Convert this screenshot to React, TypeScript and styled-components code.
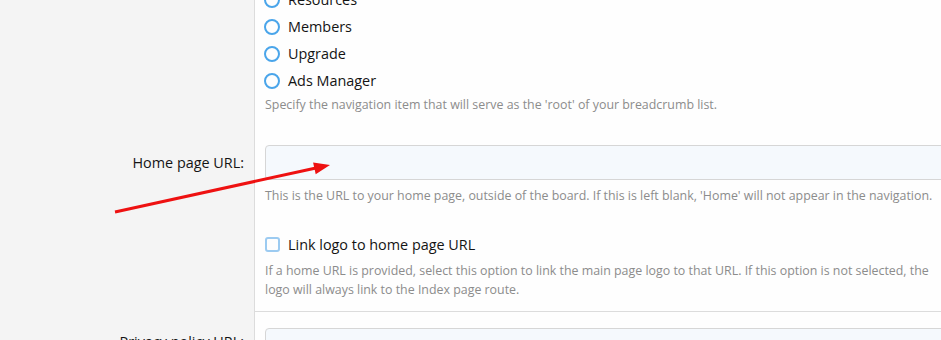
import styled, { createGlobalStyle } from "styled-components";

const GlobalStyle = createGlobalStyle`
  body {
    margin: 0;
    background: #fefefe;
    overflow: hidden;
    font-family: "Open Sans", "Noto Sans", sans-serif;
    color: #141414;
  }
`;

const Page = styled.div`
  position: relative;
  width: 960px;
  margin-top: -14px;
`;

const FormRow = styled.div`
  display: grid;
  grid-template-columns: 255px 1fr;
`;

const Term = styled.div<{ $pt?: number; $pb?: number }>`
  background: #f4f4f4;
  border-right: 1px solid #dcdcdc;
  text-align: right;
  padding: ${(p) => p.$pt ?? 0}px 10px ${(p) => p.$pb ?? 0}px 10px;
`;

const Desc = styled.div<{ $pt?: number; $pb?: number; $separated?: boolean }>`
  padding: ${(p) => p.$pt ?? 0}px 10px ${(p) => p.$pb ?? 0}px 10px;
  border-top: ${(p) => (p.$separated ? "1px solid #dcdcdc" : "none")};
`;

const Label = styled.div`
  font-size: 14.4px;
  line-height: 35px;
  color: #141414;
`;

const ChoiceList = styled.div`
  display: flex;
  flex-direction: column;
`;

const Choice = styled.label`
  display: flex;
  align-items: center;
  gap: 8px;
  height: 27px;
  font-size: 14.4px;
  color: #141414;
`;

const RadioMark = styled.span`
  box-sizing: border-box;
  width: 16px;
  height: 16px;
  margin-left: -1px;
  border: 2.5px solid #4aa5ea;
  border-radius: 50%;
  flex-shrink: 0;
`;

const CheckMark = styled.span`
  box-sizing: border-box;
  width: 15px;
  height: 15px;
  border: 2px solid #9ccbf1;
  border-radius: 3px;
  flex-shrink: 0;
`;

const Hint = styled.div<{ $mt?: number }>`
  margin-top: ${(p) => p.$mt ?? 0}px;
  font-size: 12.4px;
  line-height: 19px;
  color: #8c8c8c;
`;

const TextInput = styled.div`
  box-sizing: border-box;
  height: 35px;
  border: 1px solid #d6d6d6;
  border-radius: 4px;
  background: #f5f9fd;
`;

const Arrow = styled.svg`
  position: absolute;
  left: 0;
  top: 14px;
  pointer-events: none;
`;

export default function App() {
  return (
    <>
      <GlobalStyle />
      <Page>
        <FormRow>
          <Term />
          <Desc $pb={16}>
            <ChoiceList>
              {["Resources", "Members", "Upgrade", "Ads Manager"].map((item) => (
                <Choice key={item}>
                  <RadioMark />
                  {item}
                </Choice>
              ))}
            </ChoiceList>
            <Hint $mt={1}>
              Specify the navigation item that will serve as the 'root' of your breadcrumb list.
            </Hint>
          </Desc>
        </FormRow>

        <FormRow>
          <Term $pt={15}>
            <Label>Home page URL:</Label>
          </Term>
          <Desc $pt={15} $pb={10}>
            <TextInput />
            <Hint $mt={6}>
              This is the URL to your home page, outside of the board. If this is left blank,
              'Home' will not appear in the navigation.
            </Hint>
          </Desc>
        </FormRow>

        <FormRow>
          <Term />
          <Desc $pt={16} $pb={12}>
            <Choice>
              <CheckMark />
              Link logo to home page URL
            </Choice>
            <Hint $mt={3}>
              If a home URL is provided, select this option to link the main page logo to that
              URL. If this option is not selected, the logo will always link to the Index page
              route.
            </Hint>
          </Desc>
        </FormRow>

        <FormRow>
          <Term $pt={13}>
            <Label>Privacy policy URL:</Label>
          </Term>
          <Desc $pt={16} $pb={10} $separated>
            <TextInput />
          </Desc>
        </FormRow>

        <Arrow width="941" height="340" viewBox="0 0 941 340">
          <line x1="115" y1="212" x2="316" y2="168" stroke="#ee1111" strokeWidth="3" />
          <polygon points="330,165 315.7,174.3 313.1,162.5" fill="#ee1111" />
        </Arrow>
      </Page>
    </>
  );
}
